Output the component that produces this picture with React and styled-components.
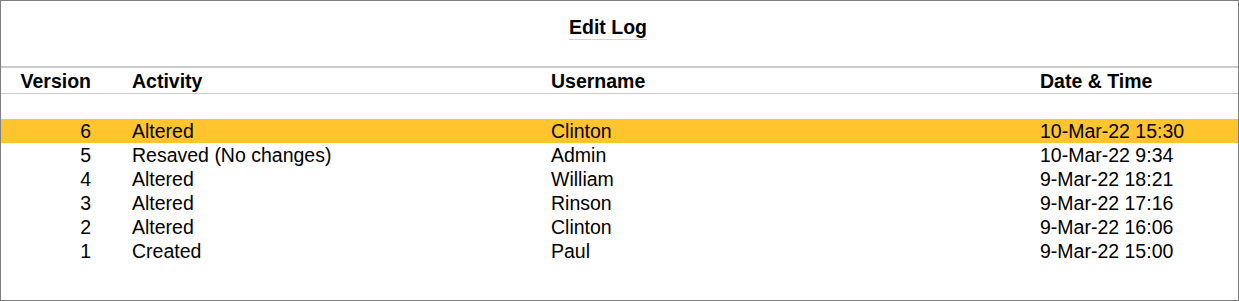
import React from "react";
import styled, { createGlobalStyle } from "styled-components";

const GlobalStyle = createGlobalStyle`
  html, body {
    margin: 0;
    padding: 0;
    background: #ffffff;
  }
  body {
    font-family: "Liberation Sans", Arial, sans-serif;
    color: #000000;
  }
`;

const rows = [
  { version: 6, activity: "Altered", user: "Clinton", date: "10-Mar-22 15:30" },
  { version: 5, activity: "Resaved (No changes)", user: "Admin", date: "10-Mar-22 9:34" },
  { version: 4, activity: "Altered", user: "William", date: "9-Mar-22 18:21" },
  { version: 3, activity: "Altered", user: "Rinson", date: "9-Mar-22 17:16" },
  { version: 2, activity: "Altered", user: "Clinton", date: "9-Mar-22 16:06" },
  { version: 1, activity: "Created", user: "Paul", date: "9-Mar-22 15:00" },
];

function App() {
  return (
    <>
      <GlobalStyle />
      <Frame>
        <TitleBar>
          <Title>Edit Log</Title>
        </TitleBar>
        <HeaderRow>
          <Cell $right>Version</Cell>
          <Cell>Activity</Cell>
          <Cell>Username</Cell>
          <Cell>Date &amp; Time</Cell>
        </HeaderRow>
        <Body>
          {rows.map((r) => (
            <Row key={r.version} $active={r.version === 6}>
              <Cell $right>{r.version}</Cell>
              <Cell>{r.activity}</Cell>
              <Cell>{r.user}</Cell>
              <Cell>{r.date}</Cell>
            </Row>
          ))}
        </Body>
      </Frame>
    </>
  );
}

const Frame = styled.div`
  width: 1239px;
  height: 301px;
  box-sizing: border-box;
  border: 1px solid #7f7f7f;
  display: flex;
  flex-direction: column;
  font-size: 19.5px;
`;

const TitleBar = styled.div`
  height: 67px;
  flex-shrink: 0;
  display: flex;
  justify-content: center;
  align-items: flex-start;
  padding-right: 23px;
  box-sizing: border-box;
  border-bottom: 2px solid #cbcbcb;
`;

const Title = styled.div`
  margin-top: 15px;
  font-weight: bold;
  line-height: 22px;
  padding-bottom: 1px;
  border-bottom: 1px solid #d4d4d4;
`;

const HeaderRow = styled.div`
  display: grid;
  grid-template-columns: 90px 460px 489px 1fr;
  padding: 2px 0 1px;
  line-height: 22px;
  font-weight: bold;
  border-bottom: 1px solid #cbcbcb;
  & > :nth-child(2) {
    padding-left: 41px;
  }
`;

const Body = styled.div`
  padding-top: 25px;
`;

const Row = styled.div`
  display: grid;
  grid-template-columns: 90px 460px 489px 1fr;
  line-height: 24px;
  height: 24px;
  background: ${(p) => (p.$active ? "#ffc42e" : "transparent")};
  & > :nth-child(2) {
    padding-left: 41px;
  }
`;

const Cell = styled.div`
  white-space: nowrap;
  text-align: ${(p) => (p.$right ? "right" : "left")};
`;

export default App;
